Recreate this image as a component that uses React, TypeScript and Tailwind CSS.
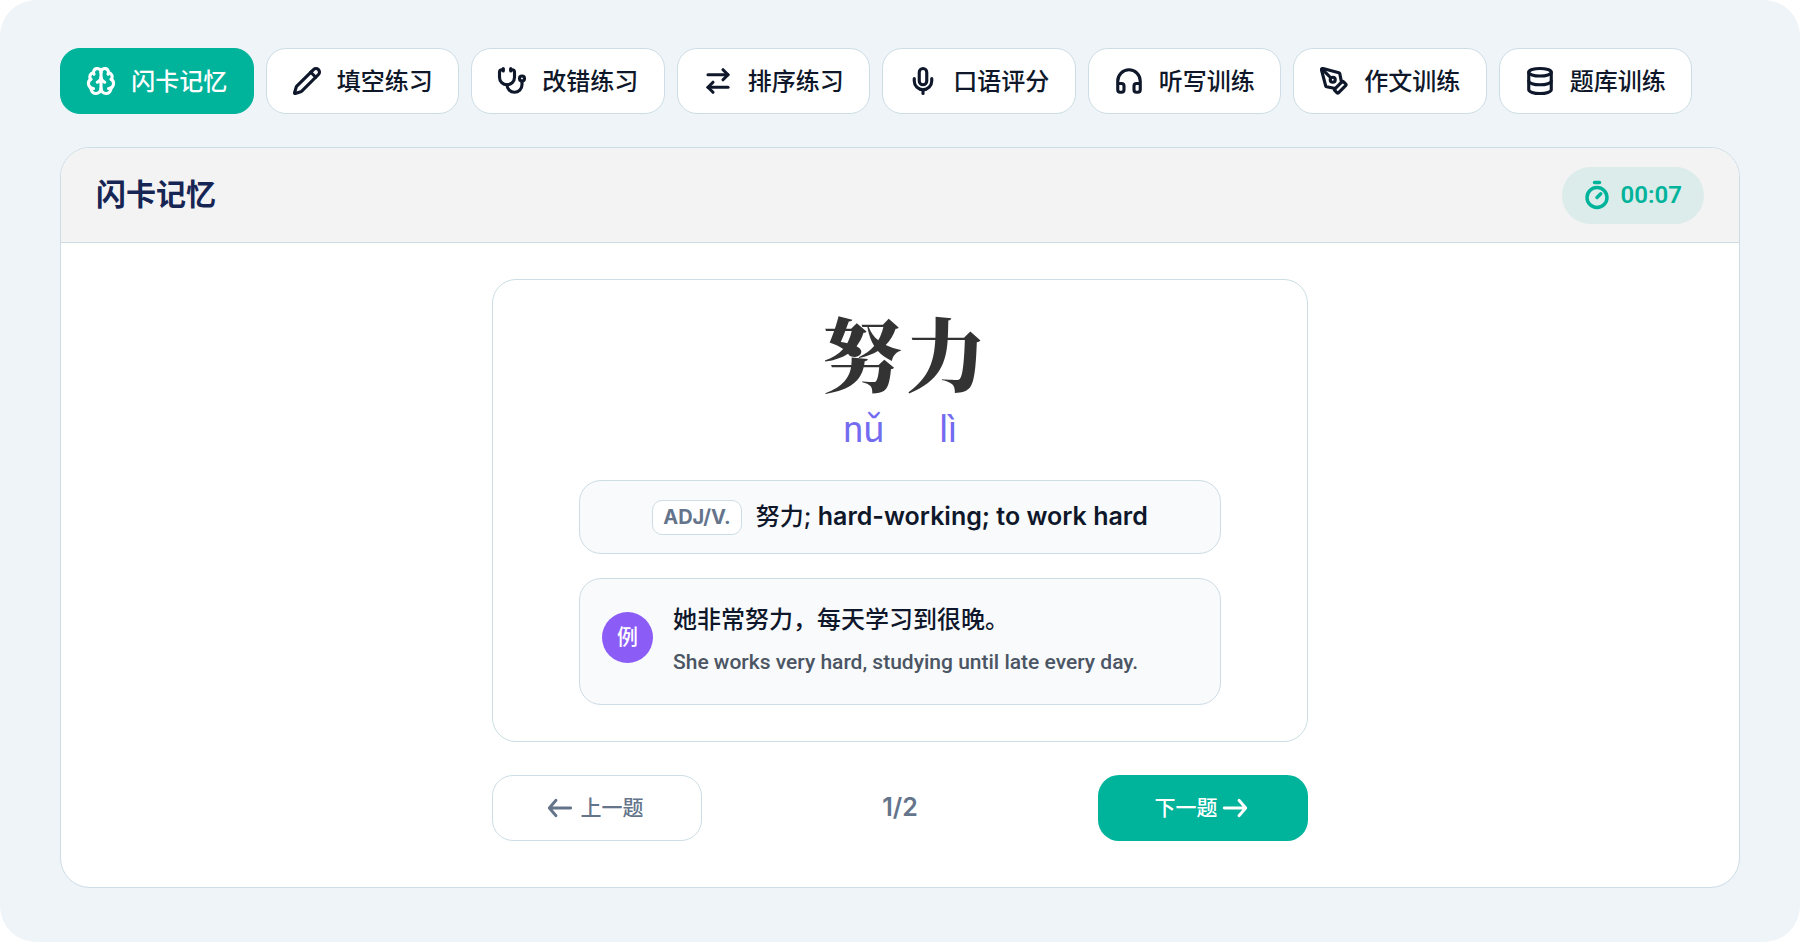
import { useState } from "react";
import {
  ArrowRightLeft,
  Brain,
  Database,
  Headphones,
  Mic,
  Pencil,
  PenTool,
  Stethoscope,
  Timer,
} from "lucide-react";

const modes = [
  { label: "闪卡记忆", icon: Brain },
  { label: "填空练习", icon: Pencil },
  { label: "改错练习", icon: Stethoscope },
  { label: "排序练习", icon: ArrowRightLeft },
  { label: "口语评分", icon: Mic },
  { label: "听写训练", icon: Headphones },
  { label: "作文训练", icon: PenTool },
  { label: "题库训练", icon: Database },
];

const syllables = [
  { hanzi: "努", pinyin: "nǔ" },
  { hanzi: "力", pinyin: "lì" },
];

function Arrow({ back = false }: { back?: boolean }) {
  return (
    <svg
      width="26"
      height="20"
      viewBox="0 0 26 20"
      fill="none"
      stroke="currentColor"
      strokeWidth="2.9"
      strokeLinecap="round"
      strokeLinejoin="round"
      aria-hidden="true"
    >
      {back ? (
        <path d="M9 2.3 2.3 10 9 17.7M2.3 10h21.4" />
      ) : (
        <path d="m17 2.3 6.7 7.7-6.7 7.7M23.7 10H2.3" />
      )}
    </svg>
  );
}

export default function App() {
  const [active, setActive] = useState(0);

  return (
    <main className="flex min-h-screen flex-col gap-[33px] rounded-[36px] bg-[#eef4f7] px-[60px] pt-12 pb-[54px] font-['Roboto','Noto_Sans_CJK_SC',sans-serif] text-[#0f172a]">
      <nav className="grid max-w-[1632px] grid-cols-8 gap-3">
        {modes.map(({ label, icon: Icon }, i) => (
          <button
            key={label}
            type="button"
            onClick={() => setActive(i)}
            className={
              i === active
                ? "flex h-[66px] items-center justify-center gap-[15px] rounded-[20px] border border-[#00b39b] bg-[#00b39b] text-2xl font-medium whitespace-nowrap text-white"
                : "flex h-[66px] items-center justify-center gap-[15px] rounded-[20px] border border-[#cddde5] bg-white text-2xl font-medium whitespace-nowrap"
            }
          >
            <Icon size={30} strokeWidth={2.5} aria-hidden="true" />
            <span className="pt-0.5">{label}</span>
          </button>
        ))}
      </nav>

      <section className="flex flex-1 flex-col overflow-hidden rounded-[30px] border border-[#cddde5] bg-white">
        <header className="flex h-[95px] items-center justify-between border-b border-[#cddde5] bg-[#f3f3f3] px-[35px]">
          <h1 className="text-3xl font-bold text-[#172554]">{modes[active].label}</h1>
          <div className="flex h-[57px] items-center gap-[9px] rounded-full bg-[#dcecea] ps-5 pe-[22px] text-2xl font-semibold text-[#00b39b]">
            <Timer size={30} strokeWidth={2.75} aria-hidden="true" />
            <time>00:07</time>
          </div>
        </header>

        <div className="mx-auto flex w-full max-w-[816px] flex-col gap-[33px] pt-9">
          <article className="flex flex-col items-center rounded-3xl border border-[#cddde5] px-[86px] pt-[26px] pb-9">
            <div className="flex gap-1 ps-2">
              {syllables.map(({ hanzi, pinyin }) => (
                <div key={hanzi} className="flex w-20 flex-col items-center">
                  <span className="font-['Noto_Serif_CJK_SC','Noto_Sans_CJK_SC',serif] text-[80px] leading-[90px] font-black text-[#333333]">
                    {hanzi}
                  </span>
                  <span className="ps-1 pt-2.5 text-4xl leading-[48px] text-[#736cf0]">{pinyin}</span>
                </div>
              ))}
            </div>

            <div className="mt-[26px] flex h-[74px] w-full items-center justify-center gap-[14px] rounded-[22px] border border-[#cddde5] bg-[#f8fafc] font-['Inter','Noto_Sans_CJK_SC',sans-serif]">
              <span className="flex h-[35px] items-center rounded-[10px] border border-[#cddde5] bg-white px-[10px] text-xl font-bold text-[#64748b]">
                ADJ/V.
              </span>
              <p className="text-[25px] font-semibold">
                <span className="text-2xl font-medium">努力; </span>hard-working; to work hard
              </p>
            </div>

            <div className="mt-6 flex h-[127px] w-full items-center gap-5 rounded-[22px] border border-[#cddde5] bg-[#f8fafc] px-[22px] pb-2">
              <span className="flex size-[51px] shrink-0 items-center justify-center rounded-full bg-[#8b5cf6] text-[21px] font-medium text-white">
                例
              </span>
              <div>
                <p className="text-2xl leading-[48px] font-medium">她非常努力，每天学习到很晚。</p>
                <p className="text-[21px] leading-9 font-medium text-[#4b5563]">
                  She works very hard, studying until late every day.
                </p>
              </div>
            </div>
          </article>

          <div className="flex items-center justify-between">
            <button
              type="button"
              className="flex h-[66px] w-[210px] items-center justify-center gap-2 rounded-[21px] border border-[#cddde5] bg-white pe-1 text-[21px] font-medium text-[#64748b]"
            >
              <Arrow back />
              <span className="pt-0.5">上一题</span>
            </button>
            <span className="font-['Inter',sans-serif] text-[25px] font-semibold text-[#64748b]">1/2</span>
            <button
              type="button"
              className="flex h-[66px] w-[210px] items-center justify-center gap-1 rounded-[21px] bg-[#00b39b] pe-1 text-[21px] font-medium text-white"
            >
              <span className="pt-0.5">下一题</span>
              <Arrow />
            </button>
          </div>
        </div>
      </section>
    </main>
  );
}
